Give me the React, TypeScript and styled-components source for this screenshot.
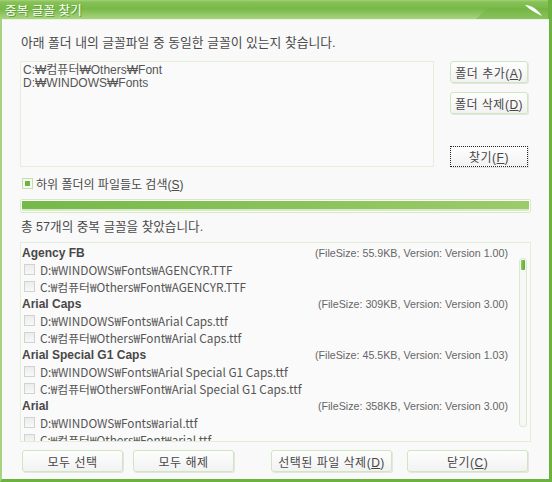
import styled, { createGlobalStyle } from 'styled-components';

const GlobalStyle = createGlobalStyle`
  html, body {
    margin: 0;
    padding: 0;
    background: #ffffff;
  }
  body {
    font-family: 'Liberation Sans', 'Noto Sans CJK KR', sans-serif;
    color: #484848;
  }
`;

const Window = styled.div`
  width: 552px;
  height: 482px;
  display: flex;
  flex-direction: column;
  background: #6fb542;
`;

const TitleBar = styled.div`
  position: relative;
  height: 19px;
  flex: none;
  display: flex;
  align-items: center;
  padding-left: 5px;
  background: linear-gradient(#a4d27e 0px, #86c155 2px, #78b947 9px, #95c96a 15px, #a9d47f 19px);
`;

const TitleText = styled.span`
  font: 12.5px 'Noto Sans CJK KR', sans-serif;
  color: #ffffff;
  text-shadow: 1px 1px 0 #5e9c34;
  letter-spacing: 0.3px;
`;

const TitleDeco = styled.svg`
  position: absolute;
  right: 0;
  top: 0;
`;

const Frame = styled.div`
  flex: 1;
  display: flex;
  min-height: 0;
  border-left: 2px solid #a6d37f;
  border-right: 3px solid #6cb23f;
  border-bottom: 3px solid #6cb23f;
`;

const Body = styled.div`
  flex: 1;
  display: flex;
  flex-direction: column;
  background: #f9f9f9;
  border-left: 1px solid #ffffff;
  border-top: 1px solid #e8f3df;
  padding: 0 18px 0 17px;
`;

const Label = styled.div<{ $top: number; $size: number }>`
  font-size: ${p => p.$size}px;
  line-height: 16px;
  margin-top: ${p => p.$top}px;
  padding-left: 1px;
  color: #4a4a4a;
  white-space: nowrap;
`;

const FolderRow = styled.div`
  display: flex;
  margin-top: 10px;
  height: 106px;
`;

const FolderBox = styled.div`
  width: 414px;
  box-sizing: border-box;
  border: 1px solid #e3efda;
  background: #fafafa;
  padding: 2px 2px;
  font-size: 12px;
  line-height: 13px;
  color: #555;
`;

const SideButtons = styled.div`
  display: flex;
  flex-direction: column;
  margin-left: 16px;
  gap: 9px;
`;

const Button = styled.button<{ $w: number; $h?: number; $focus?: boolean }>`
  width: ${p => p.$w}px;
  height: ${p => p.$h ?? 22}px;
  box-sizing: border-box;
  padding: 0;
  font: 12px 'Liberation Sans', 'Noto Sans CJK KR', sans-serif;
  color: #474747;
  background: linear-gradient(#fefefe, #f2f2f2);
  border: 1px solid ${p => (p.$focus ? '#222' : '#cfe7bf')};
  border-style: ${p => (p.$focus ? 'dotted' : 'solid')};
  border-radius: ${p => (p.$focus ? '0' : '3px')};
  box-shadow: 1px 1px 0 #e4e4e4;
  letter-spacing: 0.5px;
  u {
    text-decoration: underline;
  }
`;

const Spacer = styled.div`
  flex: 1;
`;

const CheckRow = styled.div`
  display: flex;
  align-items: center;
  margin-top: 8px;
  padding-left: 2px;
  height: 16px;
  font-size: 12px;
  color: #4a4a4a;
  gap: 3px;
`;

const CheckedBox = styled.span`
  width: 11px;
  height: 11px;
  box-sizing: border-box;
  border: 1px solid #c3e0ac;
  background: #f6faf2;
  display: flex;
  align-items: center;
  justify-content: center;
  &::after {
    content: '';
    width: 5px;
    height: 5px;
    background: #6db540;
  }
`;

const Progress = styled.div`
  margin-top: 8px;
  height: 14px;
  box-sizing: border-box;
  border: 1px solid #d6eac8;
  border-radius: 2px;
  background: #ffffff;
  padding: 1px;
  display: flex;
`;

const ProgressFill = styled.div`
  flex: 1;
  background: linear-gradient(#00000000 0 8px, #d6eac6 8px),
    linear-gradient(90deg, #75b948, #9ccb6a);
`;

const List = styled.div`
  margin-top: 7px;
  height: 200px;
  box-sizing: border-box;
  border: 1px solid #e1eed8;
  background: #fafafa;
  display: flex;
`;

const ListInner = styled.div`
  flex: 1;
  overflow: hidden;
  padding: 1px 11px 0 1px;
`;

const Row = styled.div`
  height: 17px;
  display: flex;
  align-items: center;
  font: 11.8px 'Noto Sans CJK KR', sans-serif;
  color: #555;
  white-space: nowrap;
`;

const Heading = styled.span`
  font: bold 12px 'Liberation Sans', 'Noto Sans CJK KR', sans-serif;
  color: #484848;
  flex: 1;
`;

const Info = styled.span`
  font: 10.7px 'Liberation Sans', sans-serif;
  color: #666;
`;

const Box = styled.span`
  width: 11px;
  height: 11px;
  box-sizing: border-box;
  border: 1px solid #d2d2d2;
  background: linear-gradient(#ececec, #f8f8f8);
  margin: 0 5px 0 2px;
  flex: none;
`;

const Scrollbar = styled.div`
  width: 8px;
  margin: 15px 3px 14px 0;
  box-sizing: border-box;
  border: 1px solid #d9ebcc;
  border-radius: 3px;
  background: #f7f7f7;
  padding: 1px;
`;

const Thumb = styled.div`
  height: 10px;
  background: linear-gradient(90deg, #8ccb5c, #5fa832);
  border-radius: 1px;
`;

const BottomBar = styled.div`
  display: flex;
  margin-top: 8px;
  padding: 0 3px 0 2px;
`;

const Group = styled.div<{ $gap: number }>`
  display: flex;
  gap: ${p => p.$gap}px;
`;

type Entry = { name: string; info: string; files: string[] };

const entries: Entry[] = [
  {
    name: 'Agency FB',
    info: '(FileSize: 55.9KB, Version: Version 1.00)',
    files: ['D:₩WINDOWS₩Fonts₩AGENCYR.TTF', 'C:₩컴퓨터₩Others₩Font₩AGENCYR.TTF'],
  },
  {
    name: 'Arial Caps',
    info: '(FileSize: 309KB, Version: Version 3.00)',
    files: ['D:₩WINDOWS₩Fonts₩Arial Caps.ttf', 'C:₩컴퓨터₩Others₩Font₩Arial Caps.ttf'],
  },
  {
    name: 'Arial Special G1 Caps',
    info: '(FileSize: 45.5KB, Version: Version 1.03)',
    files: ['D:₩WINDOWS₩Fonts₩Arial Special G1 Caps.ttf', 'C:₩컴퓨터₩Others₩Font₩Arial Special G1 Caps.ttf'],
  },
  {
    name: 'Arial',
    info: '(FileSize: 358KB, Version: Version 3.00)',
    files: ['D:₩WINDOWS₩Fonts₩arial.ttf', 'C:₩컴퓨터₩Others₩Font₩arial.ttf'],
  },
];

export default function App() {
  return (
    <>
      <GlobalStyle />
      <Window>
        <TitleBar>
          <TitleText>중복 글꼴 찾기</TitleText>
          <TitleDeco width="76" height="19" viewBox="0 0 76 19">
            <path d="M0 19 L12 8 L76 8 L76 19 Z" fill="#71b544" opacity="0.55" />
            <path d="M49 5 C56 5 62 10 66 16 C60 13 54 10 49 5 Z" fill="#ffffff" />
            <rect x="72" y="0" width="4" height="19" fill="#6cb23f" />
          </TitleDeco>
        </TitleBar>
        <Frame>
          <Body>
            <Label $top={15} $size={12.8}>
              아래 폴더 내의 글꼴파일 중 동일한 글꼴이 있는지 찾습니다.
            </Label>
            <FolderRow>
              <FolderBox>
                <div>C:₩컴퓨터₩Others₩Font</div>
                <div>D:₩WINDOWS₩Fonts</div>
              </FolderBox>
              <SideButtons>
                <Button $w={78}>
                  폴더 추가(<u>A</u>)
                </Button>
                <Button $w={78}>
                  폴더 삭제(<u>D</u>)
                </Button>
                <Spacer />
                <Button $w={78} $h={21} $focus>
                  찾기(<u>F</u>)
                </Button>
              </SideButtons>
            </FolderRow>
            <CheckRow>
              <CheckedBox />
              <span>
                하위 폴더의 파일들도 검색(<u>S</u>)
              </span>
            </CheckRow>
            <Progress>
              <ProgressFill />
            </Progress>
            <Label $top={6} $size={12.6}>
              총 57개의 중복 글꼴을 찾았습니다.
            </Label>
            <List>
              <ListInner>
                {entries.map(e => (
                  <div key={e.name}>
                    <Row>
                      <Heading>{e.name}</Heading>
                      <Info>{e.info}</Info>
                    </Row>
                    {e.files.map(f => (
                      <Row key={f}>
                        <Box />
                        {f}
                      </Row>
                    ))}
                  </div>
                ))}
              </ListInner>
              <Scrollbar>
                <Thumb />
              </Scrollbar>
            </List>
            <BottomBar>
              <Group $gap={10}>
                <Button $w={101}>모두 선택</Button>
                <Button $w={101}>모두 해제</Button>
              </Group>
              <Spacer />
              <Group $gap={15}>
                <Button $w={121}>
                  선택된 파일 삭제(<u>D</u>)
                </Button>
                <Button $w={121}>
                  닫기(<u>C</u>)
                </Button>
              </Group>
            </BottomBar>
          </Body>
        </Frame>
      </Window>
    </>
  );
}
